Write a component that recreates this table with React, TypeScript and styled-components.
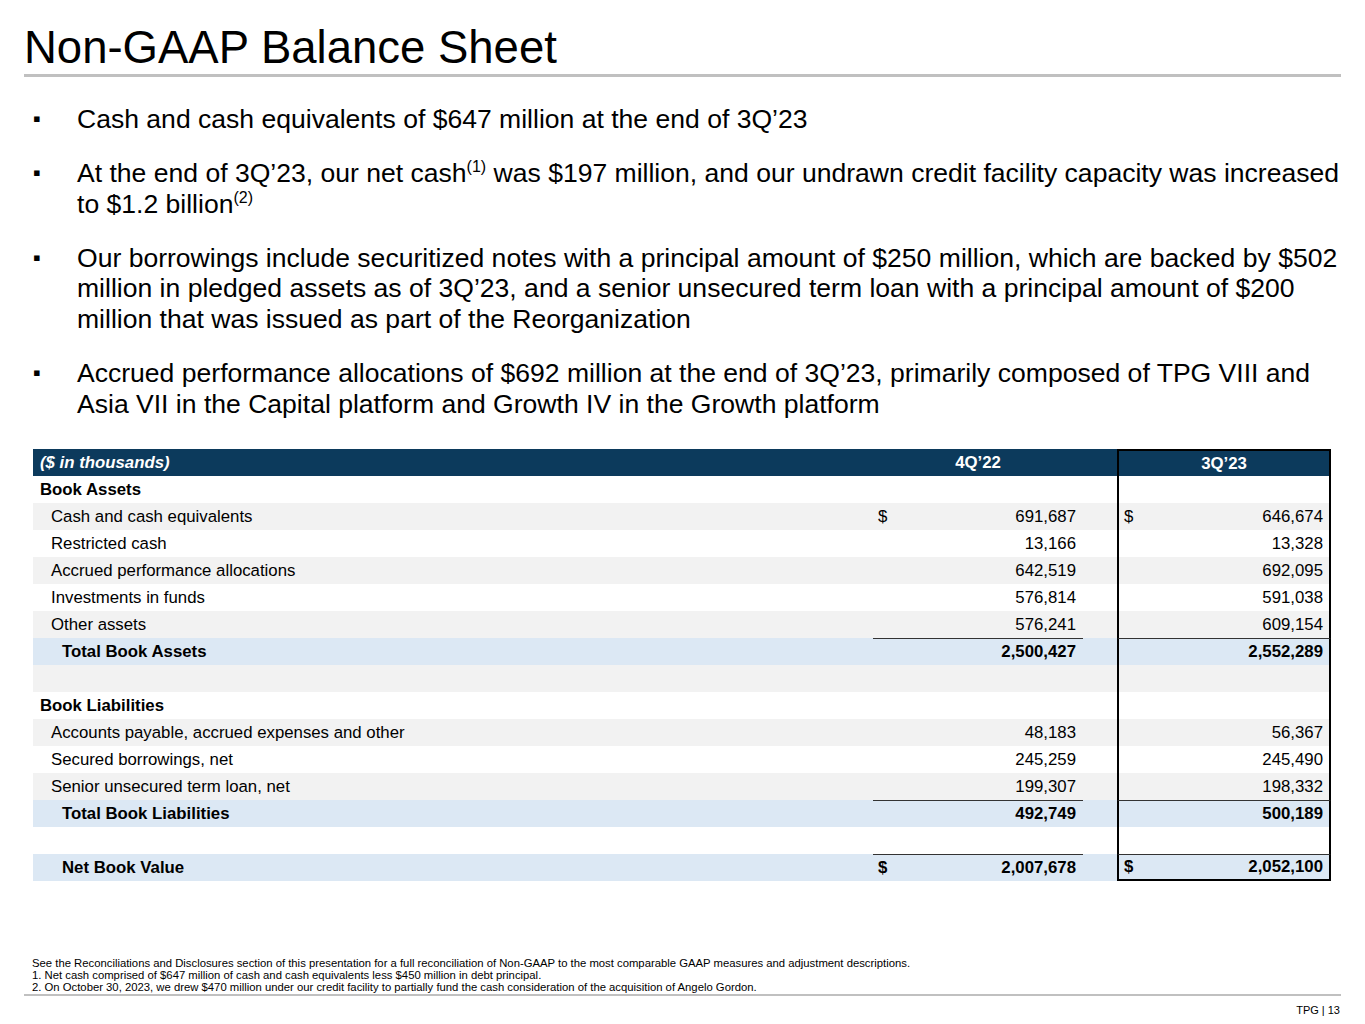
import React from "react";
import styled, { createGlobalStyle, css } from "styled-components";

const GlobalStyle = createGlobalStyle`
  html, body {
    margin: 0;
    padding: 0;
    background: #ffffff;
  }
  body {
    font-family: "Liberation Sans", Arial, sans-serif;
    color: #000000;
  }
`;

type Bg = "white" | "grey" | "blue";
type Kind = "section" | "item" | "total" | "blank";

type Row = {
  label: string;
  kind: Kind;
  bg: Bg;
  a?: string;
  b?: string;
  dollar?: boolean;
  rule?: boolean;
};

const rows: Row[] = [
  { label: "Book Assets", kind: "section", bg: "white" },
  { label: "Cash and cash equivalents", kind: "item", bg: "grey", a: "691,687", b: "646,674", dollar: true },
  { label: "Restricted cash", kind: "item", bg: "white", a: "13,166", b: "13,328" },
  { label: "Accrued performance allocations", kind: "item", bg: "grey", a: "642,519", b: "692,095" },
  { label: "Investments in funds", kind: "item", bg: "white", a: "576,814", b: "591,038" },
  { label: "Other assets", kind: "item", bg: "grey", a: "576,241", b: "609,154" },
  { label: "Total Book Assets", kind: "total", bg: "blue", a: "2,500,427", b: "2,552,289", rule: true },
  { label: "", kind: "blank", bg: "grey" },
  { label: "Book Liabilities", kind: "section", bg: "white" },
  { label: "Accounts payable, accrued expenses and other", kind: "item", bg: "grey", a: "48,183", b: "56,367" },
  { label: "Secured borrowings, net", kind: "item", bg: "white", a: "245,259", b: "245,490" },
  { label: "Senior unsecured term loan, net", kind: "item", bg: "grey", a: "199,307", b: "198,332" },
  { label: "Total Book Liabilities", kind: "total", bg: "blue", a: "492,749", b: "500,189", rule: true },
  { label: "", kind: "blank", bg: "white" },
  { label: "Net Book Value", kind: "total", bg: "blue", a: "2,007,678", b: "2,052,100", dollar: true, rule: true },
];

const bgColors: Record<Bg, string> = {
  white: "#ffffff",
  grey: "#f2f2f2",
  blue: "#dce8f4",
};

const Page = styled.div`
  width: 1365px;
  height: 1024px;
  box-sizing: border-box;
  padding: 25px 24px 0 24px;
  display: flex;
  flex-direction: column;
`;

const Title = styled.h1`
  margin: 0;
  font-size: 45.5px;
  line-height: 45px;
  font-weight: 400;
  letter-spacing: 0;
`;

const Rule = styled.div<{ $thick?: number }>`
  height: ${({ $thick }) => $thick ?? 3}px;
  background: #c0c0c0;
`;

const Bullets = styled.ul`
  list-style: none;
  margin: 27px 0 0 0;
  padding: 0;
  display: flex;
  flex-direction: column;
  gap: 23.5px;
`;

const Bullet = styled.li`
  display: flex;
  font-size: 26.55px;
  line-height: 30.6px;
`;

const Mark = styled.span`
  width: 53px;
  flex: none;
  padding-left: 9px;
  box-sizing: border-box;
  font-size: 22px;
`;

const Sup = styled.sup`
  font-size: 16px;
  line-height: 0;
  vertical-align: 10px;
`;

const Table = styled.div`
  margin: 30px 0 0 9px;
  width: 1298px;
`;

const Grid = styled.div<{ $bg: Bg; $header?: boolean }>`
  display: grid;
  grid-template-columns: 840px 210px 34px 214px;
  height: 27px;
  background: ${({ $header, $bg }) => ($header ? "#0c3a5c" : bgColors[$bg])};
  color: ${({ $header }) => ($header ? "#ffffff" : "#000000")};
  font-size: 16.8px;
`;

const Label = styled.div<{ $kind: Kind }>`
  display: flex;
  align-items: center;
  padding-left: ${({ $kind }) => ($kind === "section" ? 7 : $kind === "item" ? 18 : 29)}px;
  font-weight: ${({ $kind }) => ($kind === "item" ? 400 : 700)};
`;

const HeaderLabel = styled.div`
  display: flex;
  align-items: center;
  padding-left: 7px;
  font-weight: 700;
  font-style: italic;
`;

const HeaderCol = styled.div<{ $boxed?: boolean }>`
  display: flex;
  align-items: center;
  justify-content: center;
  font-weight: 700;
  box-sizing: border-box;
  ${({ $boxed }) =>
    $boxed &&
    css`
      border: 2px solid #000000;
      border-bottom: none;
    `}
`;

const Amount = styled.div<{ $boxed?: boolean; $rule?: boolean; $last?: boolean; $bold?: boolean }>`
  display: flex;
  align-items: center;
  justify-content: space-between;
  box-sizing: border-box;
  padding: 0 ${({ $boxed }) => ($boxed ? 6 : 7)}px 0 5px;
  font-weight: ${({ $bold }) => ($bold ? 700 : 400)};
  ${({ $rule }) =>
    $rule &&
    css`
      border-top: 1px solid #333333;
    `}
  ${({ $boxed }) =>
    $boxed &&
    css`
      border-left: 2px solid #000000;
      border-right: 2px solid #000000;
    `}
  ${({ $last }) =>
    $last &&
    css`
      border-bottom: 2px solid #000000;
    `}
`;

const Spacer = styled.div``;

const Footer = styled.div`
  margin-top: auto;
  display: flex;
  flex-direction: column;
`;

const Notes = styled.div`
  padding-left: 8px;
  font-size: 11.3px;
  line-height: 12px;
  margin-bottom: 1px;
`;

const PageNo = styled.div`
  text-align: right;
  font-size: 11px;
  line-height: 12px;
  margin: 8px 1px 8px 0;
`;

const App = () => {
  return (
    <>
      <GlobalStyle />
      <Page>
        <Title>Non-GAAP Balance Sheet</Title>
        <Rule $thick={3} style={{ marginTop: 4 }} />
        <Bullets>
          <Bullet>
            <Mark>▪</Mark>
            <span>Cash and cash equivalents of $647 million at the end of 3Q’23</span>
          </Bullet>
          <Bullet>
            <Mark>▪</Mark>
            <span>
              At the end of 3Q’23, our net cash<Sup>(1)</Sup> was $197 million, and our undrawn credit facility
              capacity was increased to $1.2 billion<Sup>(2)</Sup>
            </span>
          </Bullet>
          <Bullet>
            <Mark>▪</Mark>
            <span>
              Our borrowings include securitized notes with a principal amount of $250 million, which are backed by
              $502 million in pledged assets as of 3Q’23, and a senior unsecured term loan with a principal amount of
              $200 million that was issued as part of the Reorganization
            </span>
          </Bullet>
          <Bullet>
            <Mark>▪</Mark>
            <span>
              Accrued performance allocations of $692 million at the end of 3Q’23, primarily composed of TPG VIII and
              Asia VII in the Capital platform and Growth IV in the Growth platform
            </span>
          </Bullet>
        </Bullets>

        <Table>
          <Grid $bg="white" $header>
            <HeaderLabel>($ in thousands)</HeaderLabel>
            <HeaderCol>4Q’22</HeaderCol>
            <Spacer />
            <HeaderCol $boxed>3Q’23</HeaderCol>
          </Grid>
          {rows.map((r, i) => {
            const bold = r.kind === "total";
            const last = i === rows.length - 1;
            return (
              <Grid key={i} $bg={r.bg}>
                <Label $kind={r.kind}>{r.label}</Label>
                <Amount $rule={r.rule} $bold={bold}>
                  <span>{r.dollar ? "$" : ""}</span>
                  <span>{r.a ?? ""}</span>
                </Amount>
                <Spacer />
                <Amount $boxed $rule={r.rule} $last={last} $bold={bold}>
                  <span>{r.dollar ? "$" : ""}</span>
                  <span>{r.b ?? ""}</span>
                </Amount>
              </Grid>
            );
          })}
        </Table>

        <Footer>
          <Notes>
            <div>
              See the Reconciliations and Disclosures section of this presentation for a full reconciliation of
              Non-GAAP to the most comparable GAAP measures and adjustment descriptions.
            </div>
            <div>1. Net cash comprised of $647 million of cash and cash equivalents less $450 million in debt principal.</div>
            <div>
              2. On October 30, 2023, we drew $470 million under our credit facility to partially fund the cash
              consideration of the acquisition of Angelo Gordon.
            </div>
          </Notes>
          <Rule $thick={2} />
          <PageNo>TPG | 13</PageNo>
        </Footer>
      </Page>
    </>
  );
};

export default App;
